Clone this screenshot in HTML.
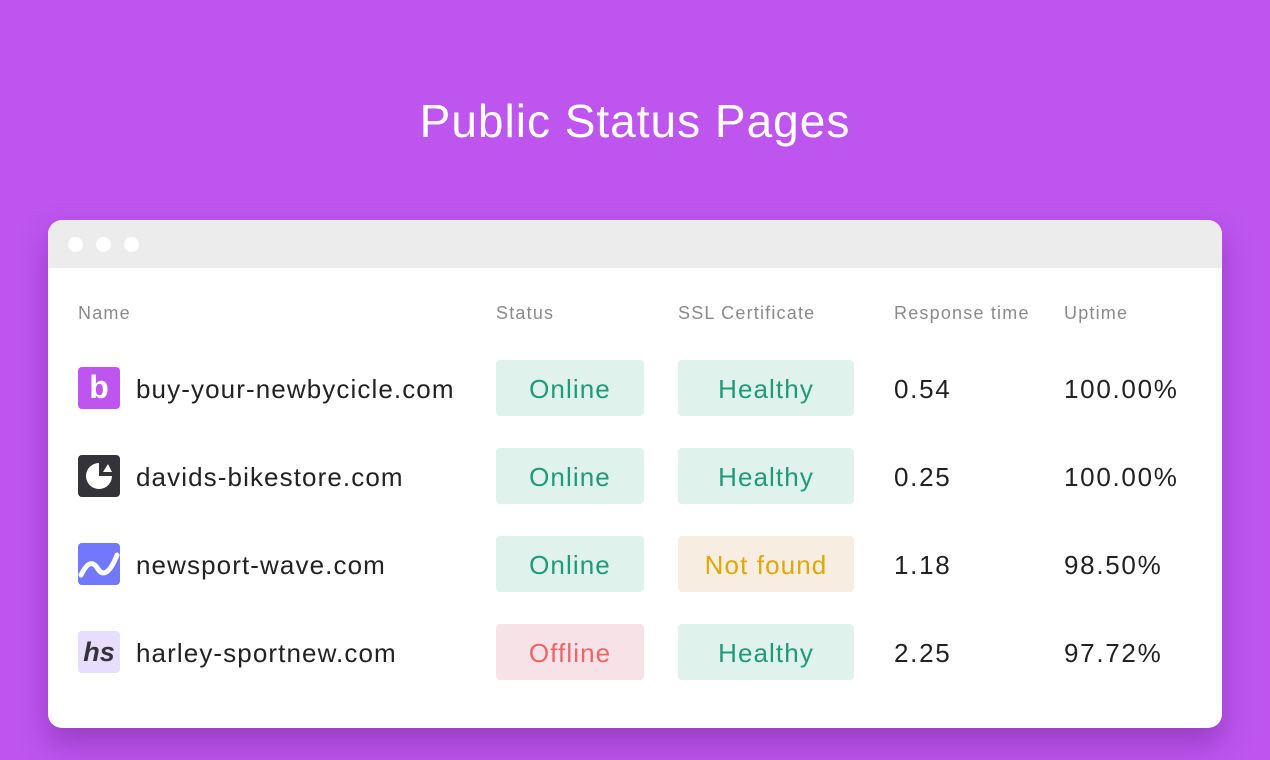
<!DOCTYPE html>
<html><head><style>
*{margin:0;padding:0;box-sizing:border-box}
body{width:1270px;height:760px;background:#bd55ee;font-family:"Liberation Sans",sans-serif;position:relative;overflow:hidden}
h1{position:absolute;top:94px;left:0;width:1270px;text-align:center;color:#fff;font-weight:400;font-size:46px;letter-spacing:1px}
.win{position:absolute;left:48px;top:220px;width:1174px;height:508px;background:#fff;border-radius:14px;overflow:hidden;box-shadow:0 16px 30px rgba(80,20,120,.35)}
.bar{height:48px;background:#ececec;position:relative}
.dot{position:absolute;top:17px;width:15px;height:15px;border-radius:50%;background:#fff}
.h{position:absolute;top:83px;font-size:18px;color:#8a8a8a;letter-spacing:1.2px}
.row{position:absolute;left:0;width:100%;height:56px}
.ic{position:absolute;left:30px;top:7px;width:42px;height:42px;border-radius:4px}
.nm{position:absolute;left:88px;top:14px;font-size:26px;color:#222;letter-spacing:1.1px}
.pill{position:absolute;top:0;height:56px;border-radius:4px;text-align:center;line-height:58px;font-size:26px;letter-spacing:1.1px}
.st{left:448px;width:148px}
.ssl{left:630px;width:176px}
.g{background:#dff3ec;color:#1f9a78}
.r{background:#f7e2e8;color:#ef6464}
.y{background:#f7ede0;color:#e0a800}
.v{position:absolute;top:14px;font-size:26px;color:#222;letter-spacing:1.7px}
</style></head><body>
<h1>Public Status Pages</h1>
<div class="win">
<div class="bar"><div class="dot" style="left:20px"></div><div class="dot" style="left:48px"></div><div class="dot" style="left:76px"></div></div>
<div class="h" style="left:30px">Name</div>
<div class="h" style="left:448px">Status</div>
<div class="h" style="left:630px">SSL Certificate</div>
<div class="h" style="left:846px">Response time</div>
<div class="h" style="left:1016px">Uptime</div>

<div class="row" style="top:140px">
<div class="ic" style="background:#bd55ee;color:#fff;font-weight:700;font-size:32px;text-align:center;line-height:40px">b</div>
<div class="nm">buy-your-newbycicle.com</div>
<div class="pill st g">Online</div><div class="pill ssl g">Healthy</div>
<div class="v" style="left:846px">0.54</div><div class="v" style="left:1016px">100.00%</div></div>

<div class="row" style="top:228px">
<div class="ic" style="background:#333339"><svg width="42" height="42"><path d="M21 8 A13 13 0 1 0 34 21 L21 21 Z" fill="#fff"/><path d="M25 17 L30 9 L34 17 Z" fill="#fff"/></svg></div>
<div class="nm">davids-bikestore.com</div>
<div class="pill st g">Online</div><div class="pill ssl g">Healthy</div>
<div class="v" style="left:846px">0.25</div><div class="v" style="left:1016px">100.00%</div></div>

<div class="row" style="top:316px">
<div class="ic" style="background:#7278fb"><svg width="42" height="42"><path d="M3 32 C10 18 15 18 20 26 C25 34 32 30 39 12" stroke="#fff" stroke-width="5" fill="none" stroke-linecap="round"/></svg></div>
<div class="nm">newsport-wave.com</div>
<div class="pill st g">Online</div><div class="pill ssl y">Not found</div>
<div class="v" style="left:846px">1.18</div><div class="v" style="left:1016px">98.50%</div></div>

<div class="row" style="top:404px">
<div class="ic" style="background:#e6defc;color:#333339;font-weight:700;font-style:italic;font-size:27px;text-align:center;line-height:42px">hs</div>
<div class="nm">harley-sportnew.com</div>
<div class="pill st r">Offline</div><div class="pill ssl g">Healthy</div>
<div class="v" style="left:846px">2.25</div><div class="v" style="left:1016px">97.72%</div></div>
</div>
</body></html>
